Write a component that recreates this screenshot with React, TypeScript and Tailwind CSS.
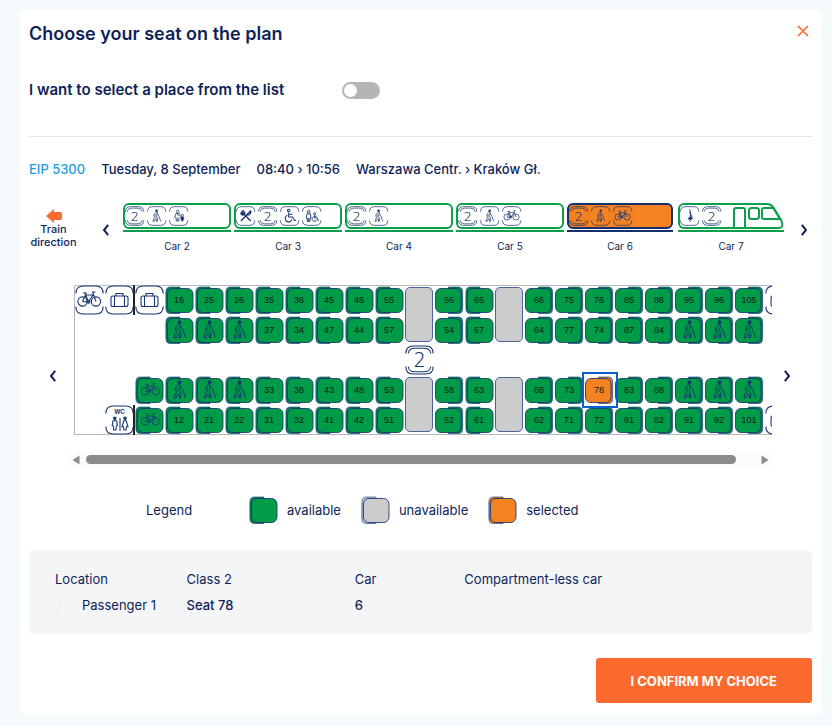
import { useState } from "react";
import type { ReactNode } from "react";

type Status = "available" | "unavailable" | "selected";
type IconName = "bike" | "luggage" | "walker" | "wc" | "family" | "food" | "wheelchair" | "companion" | "child" | "two";

const NAVY = "#17366f";

const seatColors: Record<Status, { seat: string; back: string }> = {
  available: { seat: "#009b48", back: "#06805a" },
  unavailable: { seat: "#cccccc", back: "#b4c3d4" },
  selected: { seat: "#f58220", back: "#d97b35" },
};

const cars: { number: number; icons: IconName[] }[] = [
  { number: 2, icons: ["two", "walker", "family"] },
  { number: 3, icons: ["food", "two", "wheelchair", "companion"] },
  { number: 4, icons: ["two", "walker"] },
  { number: 5, icons: ["two", "walker", "bike"] },
  { number: 6, icons: ["two", "walker", "bike"] },
  { number: 7, icons: ["child", "two"] },
];

// L / R = side of the seat back, P = priority seat, B = bike seat, T = table over two rows
const planRows = [
  "bike luggage| luggage L16 L25 L26 L35 L36 L45 L46 L55 T R56 L65 T R66 R75 R76 R85 R86 R95 R96 R105 luggage",
  "- - - LP LP LP L37 L34 L47 L44 L57 R54 L67 R64 R77 R74 R87 R84 RP RP RP -",
  "- - - - - - - - - - - two - - - - - - - - - - - -",
  "- - LB LP LP LP L33 L38 L43 L48 L53 T R58 L63 T R68 R73 R78 R83 R88 RP RP RP -",
  "- wc| LB L12 L21 L22 L31 L32 L41 L42 L51 R52 L61 R62 R71 R72 R81 R82 R91 R92 R101 luggage",
];

const Glyph = ({ name }: { name: IconName }) => {
  switch (name) {
    case "bike":
      return (
        <g>
          <circle cx="7.5" cy="16.5" r="4.6" />
          <circle cx="21" cy="16.5" r="4.6" />
          <path d="M7.5 16.5 L10.5 10 H18 L13.5 16.8 H7.5 M13.5 16.8 L10 8.5 M8 8 H12 M21 16.5 L17.6 7 H20.5 M13.5 15.3 a1.4 1.4 0 1 0 .1 0" />
        </g>
      );
    case "luggage":
      return (
        <g>
          <rect x="6" y="11" width="17" height="10.5" rx="2" />
          <path d="M11 11 V8.5 H18 V11 M9.5 11 V21.5 M19.5 11 V21.5" />
        </g>
      );
    case "walker":
      return (
        <g>
          <circle cx="14.5" cy="7.2" r="1.5" fill={NAVY} />
          <path d="M13 9.8 L10.6 12.4 L10.3 16 M13 9.8 L15.4 10.2 L16.3 13.2 L18 14.6 M15 11.5 L14.2 15.4 L15.8 18.6 L15.6 23 M12.2 12.5 L12 16.5 L9.6 20 L9.2 23 H10.8 L13.2 18.6 L14.4 20 L14.2 23 H15.6 M17.6 14.5 L20.6 23" />
        </g>
      );
    case "wc":
      return (
        <g>
          <circle cx="9.8" cy="13.2" r="1.2" fill={NAVY} />
          <circle cx="20" cy="13.2" r="1.2" fill={NAVY} />
          <path d="M8 15.8 H11.6 L12.4 20.5 L11.3 21 L10.9 25 H8.7 L8.3 21 L7.2 20.5 Z M15 13 V26 M18.8 15.8 H21.2 L23 21.8 H21.5 L21 25 H19 L18.5 21.8 H17 Z" />
          <text x="14.5" y="9" textAnchor="middle" fontSize="6" fontWeight="700" fill={NAVY} stroke="none">WC</text>
        </g>
      );
    case "family":
      return (
        <g>
          <circle cx="13" cy="8.2" r="2" />
          <path d="M10.5 11 H15.5 L17 17 M10.5 11 L8.5 17.5 H10.8 V22.5 H15 V17.5 M13 17.5 V22.5 M12 11 L14.5 15" />
          <circle cx="20" cy="14" r="1.7" />
          <path d="M18 16.5 H22 V20 H21 V22.5 H19 V20 H18 Z" fill={NAVY} />
        </g>
      );
    case "food":
      return (
        <g strokeWidth="2">
          <path d="M8 8 L22 22.5 M22 7 L7.5 22.5 M22 7 C23 11 20 13.5 17 14 M6.5 10.5 L9.5 13.5 L13 13 L12.8 9.5 L9.8 6.5 M8.3 9.3 L11 12" />
        </g>
      );
    case "wheelchair":
      return (
        <g strokeWidth="1.6">
          <circle cx="13" cy="6.8" r="1.9" />
          <path d="M13 9.8 V16.5 H19 L22 22 L24 21 M13 12.5 H18.5 M11 13.8 A5.2 5.2 0 1 0 18 20" />
        </g>
      );
    case "companion":
      return (
        <g strokeWidth="1.4">
          <circle cx="10" cy="8.5" r="2" />
          <path d="M7.5 11.8 H12.5 L13.5 18 H12 V23 H8 V18 H6.5 Z M10 18 V23" />
          <circle cx="19" cy="11.5" r="1.5" />
          <path d="M19 13.5 V18 H23 L24.5 22.5 M17.5 16 A3.6 3.6 0 1 0 22 21 M19 15.5 H22" />
        </g>
      );
    case "child":
      return (
        <g strokeWidth="1.5">
          <path d="M14 5 C17 7 13 10 16.5 13 M15.5 9 V19 M12 19 C14 17 18 17 19.5 20 M13 20 L16 23.5 M16 13 C19 15 18 17 16.5 19" />
          <circle cx="16" cy="18.5" r="1.8" fill={NAVY} />
        </g>
      );
    case "two":
      return (
        <text x="14.5" y="22" textAnchor="middle" fontSize="20" fontWeight="300" fill={NAVY} strokeWidth=".2" className="font-['Open_Sans',sans-serif]">
          2
        </text>
      );
  }
};

const Badge = ({ name, className }: { name: IconName; className: string }) => (
  <svg viewBox="0 0 30 30" className={className} fill="none" stroke={NAVY} strokeWidth="1.1" aria-hidden="true">
    <path d="M.8 8.5 Q.8 1 8.5 1 H20.5 Q28.2 1 28.2 8.5 M.8 21.5 Q.8 29 8.5 29 H20.5 Q28.2 29 28.2 21.5" />
    {name === "two" && (
      <path d="M3.2 8.5 Q4 3.2 9.5 3.2 H19.5 Q25 3.2 25.8 8.5 M3.2 21.5 Q4 26.8 9.5 26.8 H19.5 Q25 26.8 25.8 21.5" />
    )}
    <Glyph name={name} />
  </svg>
);

const SeatShape = ({ status, back = "L", children }: { status: Status; back?: string; children?: ReactNode }) => {
  const colors = seatColors[status];
  return (
    <svg viewBox="0 0 30 30" className="size-[30px]" fill="none" stroke={NAVY} strokeWidth="1" aria-hidden="true">
      <g transform={back === "R" ? "translate(28.5 0) scale(-1 1)" : undefined}>
        <path d="M.5 7 V23.5" stroke="#cfdbe7" strokeWidth="1" />
        <path d="M15 2 H5.5 Q1 2 1 6.5 V24 Q1 28.5 5.5 28.5 H15 Z" fill={colors.back} strokeOpacity=".6" />
        <rect x="2.5" y="3.5" width="25.5" height="24" rx="5.5" fill={colors.seat} strokeOpacity=".85" />
      </g>
      {children}
    </svg>
  );
};

const Chevron = ({ flip }: { flip?: boolean }) => (
  <svg viewBox="0 0 8 12" className={flip ? "h-3 w-2 rotate-180" : "h-3 w-2"} aria-hidden="true">
    <path d="M6.2 .8 L2 6 L6.2 11.2" fill="none" stroke="#0f1f57" strokeWidth="2" />
  </svg>
);

const PlanCell = ({ code, selected, onSelect }: { code: string; selected: string; onSelect: (seat: string) => void }) => {
  if (code === "-") return <div />;
  if (code === "T") {
    return (
      <div className="row-span-2 pt-[2px] pr-[2px] pb-[3px]">
        <div className="h-full rounded-[5px] border border-[#4a649b] bg-[#cccccc]" />
      </div>
    );
  }
  const match = /^([LR])(P|B|\d+)$/.exec(code);
  if (match) {
    const [, back, seat] = match;
    const isSelected = seat === selected;
    const icon = seat === "P" || seat === "B";
    return (
      <button
        type="button"
        aria-label={seat === "P" ? "Priority seat" : seat === "B" ? "Seat with bicycle" : `Seat ${seat}`}
        onClick={() => !icon && onSelect(seat)}
        className={isSelected ? "z-10 grid size-[30px] bg-white outline-2 outline-offset-1 outline-[#0b5fd0]" : "grid size-[30px]"}
      >
        <span className="col-start-1 row-start-1">
          <SeatShape status={isSelected ? "selected" : "available"} back={back}>
            {seat === "P" && <Glyph name="walker" />}
            {seat === "B" && (
              <g transform="translate(4 3) scale(.8)">
                <Glyph name="bike" />
              </g>
            )}
          </SeatShape>
        </span>
        {!icon && (
          <span className="col-start-1 row-start-1 pr-[2px] text-center font-['Liberation_Sans',sans-serif] text-[9px] leading-[30px] text-[#06220f]">
            {seat}
          </span>
        )}
      </button>
    );
  }
  const wall = code.endsWith("|");
  return (
    <div className={wall ? "border-r-2 border-[#222222]" : ""}>
      <Badge name={code.replace("|", "") as IconName} className="h-[30px] w-[30px] max-w-none" />
    </div>
  );
};

const Car = ({ number, icons, active }: { number: number; icons: IconName[]; active: boolean }) => {
  const last = number === 7;
  const body = active
    ? "flex h-[26px] items-center gap-[2px] rounded-[6px] border-2 border-[#17306b] bg-[#f58220]"
    : "flex h-[26px] items-center gap-[2px] rounded-[6px] border-2 border-[#0b9f4c]";
  const badges = icons.map((icon) => <Badge key={icon} name={icon} className="size-5" />);
  return (
    <button type="button" className={last || active ? "flex flex-col pr-[2px] text-center" : "flex flex-col text-center"} aria-pressed={active}>
      {last ? (
        <span className="flex h-[26px] w-full items-center">
          <span className="flex h-[26px] items-center gap-[2px] rounded-l-[6px] border-2 border-r-0 border-[#0b9f4c]">{badges}</span>
          <svg viewBox="0 0 62 26" preserveAspectRatio="none" className="h-[26px] min-w-0 flex-1" fill="none" stroke="#0b9f4c" strokeWidth="2" aria-hidden="true">
            <path d="M0 1 H45 Q49 1 51 4 L59.5 18 Q62 25 57 25 H0 M12 25 V7 Q12 5 14 5 H21 Q23 5 23 7 V25" />
            <rect x="27" y="5" width="10" height="11" rx="2.5" />
            <path d="M42 5 H51.5 L58 16 H42 Q40 16 40 14 V7 Q40 5 42 5 Z" />
          </svg>
        </span>
      ) : (
        <span className="block w-full">
          <span className={body}>{badges}</span>
        </span>
      )}
      <span className={active ? "mt-px h-[2px] w-full bg-[#17306b]" : "mt-px h-[2px] w-full bg-[#0b9f4c]"} />
      <span className="mt-[6px] w-full text-[10px] leading-4">Car {number}</span>
    </button>
  );
};

const App = () => {
  const [selected, setSelected] = useState("78");
  const [useList, setUseList] = useState(false);

  return (
    <div className="min-h-screen bg-[#f5fafc] pt-[10px] pr-[11px] pb-[11px] pl-5 font-['Inter',sans-serif] text-[13px] leading-5 text-[#0f1f57]">
      <main className="rounded-[4px] bg-white px-[9px] pt-3 pb-3">
        {/* Header */}
        <header className="flex items-start justify-between">
          <h1 className="text-[18px] leading-6 font-semibold">Choose your seat on the plan</h1>
          <button type="button" aria-label="Close" className="mt-[3px] mr-[3px]">
            <svg viewBox="0 0 12 12" className="size-3" aria-hidden="true">
              <path d="M1 1 L11 11 M11 1 L1 11" stroke="#fc6a2d" strokeWidth="1.6" />
            </svg>
          </button>
        </header>

        <div className="mt-[34px] flex items-center gap-[58px] border-b border-[#e5e5e5] pb-9">
          <label htmlFor="place-list" className="text-[15px] leading-5 font-semibold">
            I want to select a place from the list
          </label>
          <input
            id="place-list"
            type="checkbox"
            role="switch"
            checked={useList}
            onChange={(e) => setUseList(e.target.checked)}
            className="flex h-[17px] w-[38px] appearance-none items-center rounded-full bg-[#b5b5b5] px-[2px] before:size-[13px] before:rounded-full before:bg-white checked:justify-end checked:bg-[#0b9f4c]"
          />
        </div>

        {/* Connection */}
        <div className="mt-[22px] flex flex-wrap gap-4 font-medium">
          <span className="text-[#1d9dd9]">EIP 5300</span>
          <span>Tuesday, 8 September</span>
          <span>08:40 › 10:56</span>
          <span>Warszawa Centr. › Kraków Gł.</span>
        </div>

        {/* Train */}
        <div className="mt-6 flex items-start">
          <div className="w-[49px] shrink-0 pt-[6px] text-center text-[11px] leading-[13px] font-medium">
            <svg viewBox="0 0 16 14" className="mx-auto h-[14px] w-4" aria-hidden="true">
              <path d="M0 7 L8 0 V3 H14 Q16 3 16 5 V9 Q16 11 14 11 H8 V14 Z" fill="#fc6a2d" />
            </svg>
            Train direction
          </div>
          <button type="button" aria-label="Previous car" className="flex w-[45px] shrink-0 justify-center pt-[21px] pl-[10px]">
            <Chevron />
          </button>
          <div className="grid flex-1 grid-cols-6 gap-[3px]">
            {cars.map((car) => (
              <Car key={car.number} {...car} active={car.number === 6} />
            ))}
          </div>
          <button type="button" aria-label="Next car" className="flex w-[26px] shrink-0 justify-end pt-[21px] pr-1">
            <Chevron flip />
          </button>
        </div>

        {/* Seat plan */}
        <div className="mt-[31px] flex items-stretch">
          <button type="button" aria-label="Scroll left" className="flex w-[39px] shrink-0 items-center justify-end pr-[11px]">
            <Chevron />
          </button>
          <div className="min-w-0 flex-1">
            <div className="ml-[6px] overflow-hidden shadow-[inset_1px_1px_0_#b8b8b8,inset_0_-1px_0_#b8b8b8]">
              <div className="grid auto-rows-[30px] grid-cols-[repeat(24,30px)] pl-px">
                {planRows.flatMap((row, r) =>
                  row.split(" ").map((code, c) => (
                    <PlanCell key={`${r}-${c}`} code={code} selected={selected} onSelect={setSelected} />
                  ))
                )}
              </div>
            </div>
            <div className="mt-[17px] flex h-[15px] items-center bg-[#fcfcfc] pr-[3px] pl-1">
              <svg viewBox="0 0 8 10" className="h-[10px] w-2" aria-hidden="true">
                <path d="M7.5 .5 V9.5 L.5 5 Z" fill="#8b8b8b" />
              </svg>
              <div className="mr-[25px] ml-[6px] h-[9px] flex-1 rounded-full bg-[#8b8b8b]" />
              <svg viewBox="0 0 8 10" className="h-[10px] w-2" aria-hidden="true">
                <path d="M.5 .5 V9.5 L7.5 5 Z" fill="#8b8b8b" />
              </svg>
            </div>
          </div>
          <button type="button" aria-label="Scroll right" className="flex w-10 shrink-0 items-center pl-[11px]">
            <Chevron flip />
          </button>
        </div>

        {/* Legend */}
        <div className="mt-7 flex items-center pl-[117px]">
          <span className="w-[103px]">Legend</span>
          <div className="flex gap-5">
            {(["available", "unavailable", "selected"] as Status[]).map((status) => (
              <div key={status} className="flex items-center gap-2">
                <SeatShape status={status} />
                {status}
              </div>
            ))}
          </div>
        </div>

        {/* Summary */}
        <section className="mt-[25px] rounded-[5px] bg-[#f4f5f7] px-[26px] py-4">
          <table className="w-full table-fixed text-left">
            <thead>
              <tr className="h-[26px]">
                <th className="w-[18%] font-normal">Location</th>
                <th className="w-[23%] font-normal">Class 2</th>
                <th className="w-[15%] font-normal">Car</th>
                <th className="font-normal">Compartment-less car</th>
              </tr>
            </thead>
            <tbody>
              <tr className="h-[26px]">
                <td>
                  <span className="flex items-center gap-[11px]">
                    <svg viewBox="0 0 16 18" className="h-[18px] w-4" fill="none" stroke="#faf0e0" strokeWidth="1.6" aria-hidden="true">
                      <path d="M8 1 C4 1 4 5 5 7.5 C6 9.5 6 10.5 5 11 C2 12 .8 13 .8 16.5 Q8 18 15.2 16.5 C15.2 13 14 12 11 11 C10 10.5 10 9.5 11 7.5 C12 5 12 1 8 1 Z" />
                    </svg>
                    Passenger 1
                  </span>
                </td>
                <td className="font-medium">Seat {selected}</td>
                <td className="font-medium">6</td>
                <td />
              </tr>
            </tbody>
          </table>
        </section>

        <div className="mt-6 flex justify-end">
          <button type="button" className="h-[45px] rounded-[3px] bg-[#fc6a2d] px-[35px] text-[13px] font-bold text-white">
            I CONFIRM MY CHOICE
          </button>
        </div>
      </main>
    </div>
  );
};

export default App;
